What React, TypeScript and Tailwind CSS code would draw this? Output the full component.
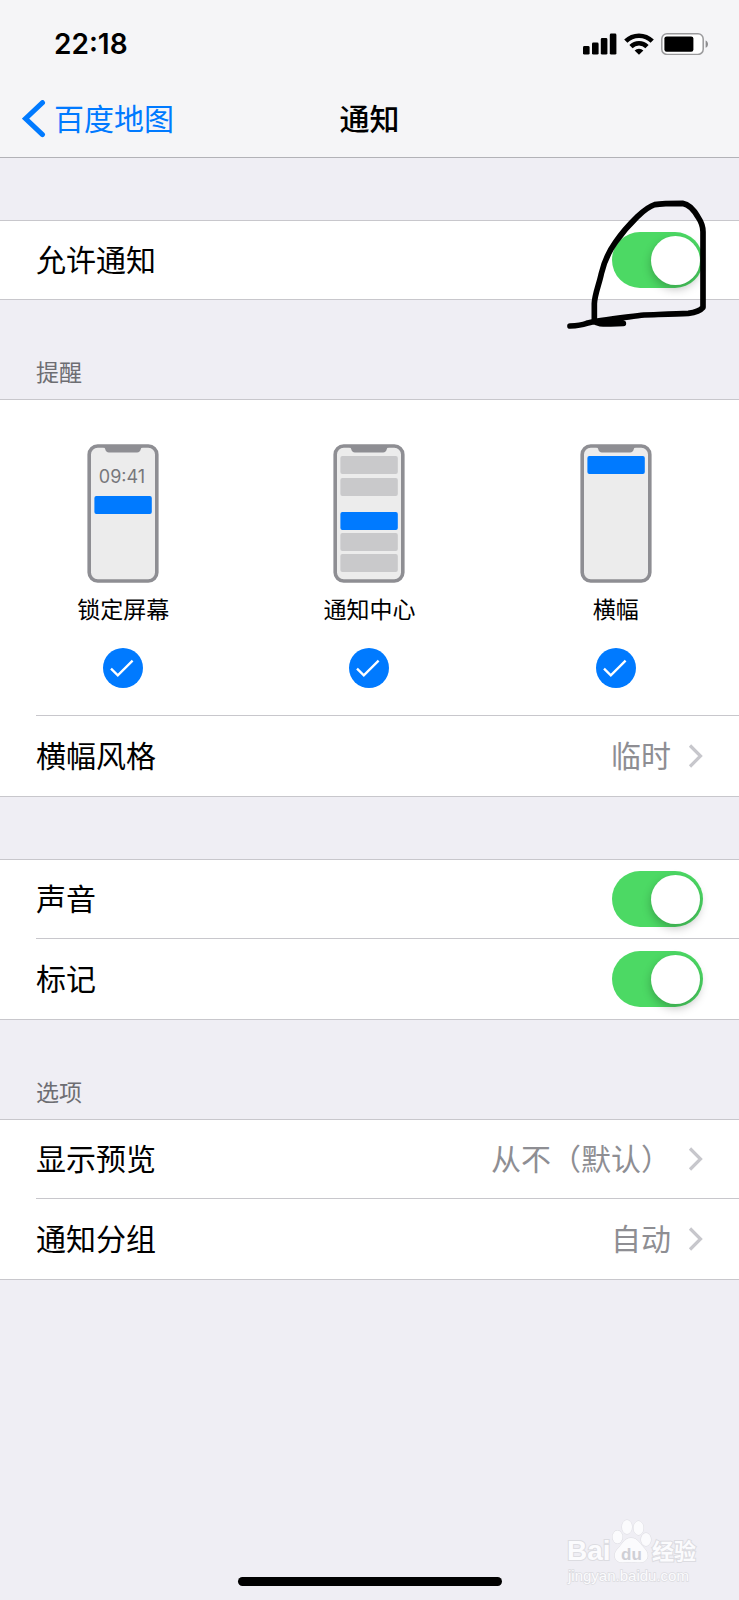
import type { ReactNode } from "react";

type RowProps = {
  label: ReactNode;
  divider?: boolean;
  children?: ReactNode;
};

type SwitchRowProps = {
  id: string;
  label: string;
  divider?: boolean;
};

type LinkRowProps = {
  label: string;
  value: string;
  divider?: boolean;
};

type AlertOptionProps = {
  id: string;
  label: string;
  children?: ReactNode;
};

function SignalIcon() {
  return (
    <svg className="h-[22px] w-[34px]" viewBox="0 0 34 22">
      <rect x="0" y="13" width="6.6" height="8.6" rx="1.4" />
      <rect x="9" y="9.6" width="6.6" height="12" rx="1.4" />
      <rect x="17.8" y="5" width="6.6" height="16.6" rx="1.4" />
      <rect x="26.8" y="0.6" width="6.6" height="21" rx="1.4" />
    </svg>
  );
}

function WifiIcon() {
  return (
    <svg className="h-[22px] w-[30px]" viewBox="0 0 30 22">
      <g fill="none" stroke="black" strokeWidth="4.6">
        <path d="M1.8 8.2 A18.8 18.8 0 0 1 28.2 8.2" />
        <path d="M7 13.6 A11.4 11.4 0 0 1 23 13.6" />
      </g>
      <path d="M10.6 17.4 A6.6 6.6 0 0 1 19.4 17.4 L15 21.8 Z" />
    </svg>
  );
}

function BatteryIcon() {
  return (
    <svg className="h-[22px] w-12" viewBox="0 0 48 22">
      <rect
        x="0.8"
        y="0.8"
        width="41.4"
        height="20.6"
        rx="5.2"
        fill="white"
        stroke="#9a9a9c"
        strokeWidth="1.5"
      />
      <rect x="3.4" y="3.4" width="29" height="15.4" rx="2.2" />
      <path d="M44.6 7.4 C47.8 8.6 47.8 13.6 44.6 14.8 Z" fill="#8e8e90" />
    </svg>
  );
}

function Chevron() {
  return (
    <svg className="h-6 w-4" viewBox="0 0 16 24" fill="none">
      <path d="M3 1.5 L13.5 12 L3 22.5" stroke="#c7c7cc" strokeWidth="3.2" />
    </svg>
  );
}

function Row({ label, divider, children }: Readonly<RowProps>) {
  return (
    <div className="pl-9">
      <div
        className={`flex items-center justify-between pr-9 ${
          divider ? "h-[81px] border-t border-[#c8c7cc]" : "h-[78px]"
        }`}
      >
        {label}
        {children}
      </div>
    </div>
  );
}

function SwitchRow({ id, label, divider }: Readonly<SwitchRowProps>) {
  return (
    <Row label={<label htmlFor={id}>{label}</label>} divider={divider}>
      <input
        id={id}
        type="checkbox"
        role="switch"
        defaultChecked
        className="flex h-14 w-[91px] appearance-none items-center rounded-full bg-gray-200 px-[3px] before:h-[49px] before:w-[49px] before:rounded-full before:bg-white before:shadow-[0_4px_10px_rgba(0,0,0,0.25)] checked:justify-end checked:bg-[#4cd964]"
      />
    </Row>
  );
}

function LinkRow({ label, value, divider }: Readonly<LinkRowProps>) {
  return (
    <a href="#" className="block">
      <Row label={<span>{label}</span>} divider={divider}>
        <span className="flex items-center gap-4 text-[#8e8e93]">
          {value}
          <Chevron />
        </span>
      </Row>
    </a>
  );
}

function Group({ children }: { children: ReactNode }) {
  return (
    <section className="relative border-y border-[#c8c7cc] bg-white">
      {children}
    </section>
  );
}

function GroupTitle({ children }: { children: ReactNode }) {
  return (
    <h2 className="flex h-[99px] items-end px-9 pb-[10px] text-[23px] leading-8 text-[#6d6d72]">
      {children}
    </h2>
  );
}

function Phone({ children }: { children?: ReactNode }) {
  return (
    <svg className="h-[140px] w-[72px]" viewBox="0 0 72 140">
      <rect
        x="2.2"
        y="2"
        width="67.6"
        height="135"
        rx="8.5"
        fill="#ececec"
        stroke="#8e8e93"
        strokeWidth="3.6"
      />
      <path
        d="M16 2 H56 V3 Q54 3.6 53.8 5 Q53.2 8.4 50 8.4 H22 Q18.8 8.4 18.2 5 Q18 3.6 16 3 Z"
        fill="#8e8e93"
      />
      {children}
    </svg>
  );
}

function Bar({ y, active }: { y: number; active?: boolean }) {
  return (
    <rect
      x="7.4"
      y={y}
      width="57.4"
      height="18"
      rx="2"
      fill={active ? "#007aff" : "#c9c9cb"}
    />
  );
}

function AlertOption({ id, label, children }: Readonly<AlertOptionProps>) {
  return (
    <label htmlFor={id} className="flex flex-col items-center">
      <Phone>{children}</Phone>
      <span className="mt-2 text-[23px] leading-9">{label}</span>
      <span className="relative mt-5 h-10 w-10">
        <input
          id={id}
          type="checkbox"
          defaultChecked
          className="peer block h-10 w-10 appearance-none rounded-full border border-[#c8c7cc] checked:border-0 checked:bg-[#007aff]"
        />
        <svg
          className="pointer-events-none absolute inset-0 hidden peer-checked:block"
          viewBox="0 0 40 40"
          fill="none"
        >
          <path d="M8 20.6 L14.8 27.4 L29.6 12.6" stroke="white" strokeWidth="2.3" />
        </svg>
      </span>
    </label>
  );
}

function Scribble() {
  return (
    <svg
      className="pointer-events-none absolute right-0 -top-8 h-[150px] w-[199px]"
      viewBox="0 0 597 450"
      fill="none"
      stroke="black"
      strokeWidth="17"
      strokeLinecap="round"
      strokeLinejoin="round"
    >
      <path d="M90 411 C112 410 126 408 140 403 C170 394 250 386 312 378 C370 376 410 375 445 373 C468 370 480 366 489 355 V128 C489 112 482 96 474 84 C462 63 448 46 428 43 C396 43 368 43 344 47 C322 54 306 70 290 85 C262 112 244 134 226 160 C206 188 192 220 184 254 C178 284 164 316 163 344 V396 C172 406 190 405 212 405 L250 403" />
    </svg>
  );
}

function Watermark() {
  return (
    <svg
      className="pointer-events-none absolute right-0 bottom-0 h-[100px] w-[199px]"
      viewBox="0 0 199 100"
      fill="#fbfbfd"
      stroke="#dcdce1"
      strokeWidth="1"
      paintOrder="stroke"
    >
      <text x="27" y="60" fontFamily="Liberation Sans" fontWeight="700" fontSize="28" strokeWidth="2">
        Bai
      </text>
      <ellipse cx="77.5" cy="37" rx="5" ry="6.5" />
      <ellipse cx="87" cy="27" rx="5" ry="7" />
      <ellipse cx="98.5" cy="28" rx="5" ry="7" />
      <ellipse cx="106" cy="39.5" rx="5" ry="6.5" />
      <path d="M91 38 C84 38 82 45 77.5 49 C72 55 75 63 83 62.5 C88 62 95 62 99 62.5 C108 63 110 55 105 49 C100 44 98 38 91 38 Z" />
      <text
        x="81"
        y="60"
        fontFamily="Liberation Sans"
        fontWeight="700"
        fontSize="17"
        fill="#cfcfd5"
        stroke="none"
      >
        du
      </text>
      <text x="112" y="59" fontFamily="Noto Sans CJK SC" fontWeight="700" fontSize="22" strokeWidth="2">
        经验
      </text>
      <text x="28" y="81" fontFamily="Liberation Sans" fontSize="15" strokeWidth="1.4">
        jingyan.baidu.com
      </text>
    </svg>
  );
}

export default function App() {
  return (
    <div className="relative flex min-h-screen flex-col bg-[#efeef4] font-['Inter','Noto_Sans_CJK_SC',sans-serif] text-[30px] leading-10 text-black">
      <header className="border-b border-[#b2b2b7] bg-[#f5f5f7]">
        <div className="flex h-[88px] items-center justify-between pl-[54px] pr-[30px]">
          <time className="text-[28px] font-semibold">22:18</time>
          <div className="flex items-center gap-[7px]">
            <SignalIcon />
            <WifiIcon />
            <BatteryIcon />
          </div>
        </div>
        <nav className="grid h-[69px] grid-cols-[1fr_auto_1fr] items-center px-[22px] pb-2">
          <a href="#" className="flex items-center gap-2 text-[#007aff]">
            <svg className="h-[38px] w-6" viewBox="0 0 24 38" fill="none">
              <path
                d="M20.5 2.6 L3.5 18.6 L20.5 34.6"
                stroke="#007aff"
                strokeWidth="5"
                strokeLinecap="round"
              />
            </svg>
            百度地图
          </a>
          <h1 className="font-medium">通知</h1>
        </nav>
      </header>

      <main className="flex flex-col">
        <div className="pt-[62px]">
          <Group>
            <SwitchRow id="allow" label="允许通知" />
            <Scribble />
          </Group>
        </div>

        <GroupTitle>提醒</GroupTitle>
        <Group>
          <div className="grid h-[315px] grid-cols-3 pt-11">
            <AlertOption id="lock" label="锁定屏幕">
              <text
                x="35"
                y="39"
                textAnchor="middle"
                fontSize="18"
                fill="#77777b"
              >
                09:41
              </text>
              <Bar y={52} active />
            </AlertOption>
            <AlertOption id="center" label="通知中心">
              <Bar y={12} />
              <Bar y={34} />
              <Bar y={68} active />
              <Bar y={89} />
              <Bar y={110} />
            </AlertOption>
            <AlertOption id="banner" label="横幅">
              <Bar y={12} active />
            </AlertOption>
          </div>
          <LinkRow label="横幅风格" value="临时" divider />
        </Group>

        <div className="pt-[62px]">
          <Group>
            <SwitchRow id="sound" label="声音" />
            <SwitchRow id="badge" label="标记" divider />
          </Group>
        </div>

        <GroupTitle>选项</GroupTitle>
        <Group>
          <LinkRow label="显示预览" value="从不（默认）" />
          <LinkRow label="通知分组" value="自动" divider />
        </Group>
      </main>

      <footer className="mt-auto flex justify-center pb-[14px]">
        <div className="h-[9px] w-[264px] rounded-full bg-black" />
      </footer>
      <Watermark />
    </div>
  );
}
